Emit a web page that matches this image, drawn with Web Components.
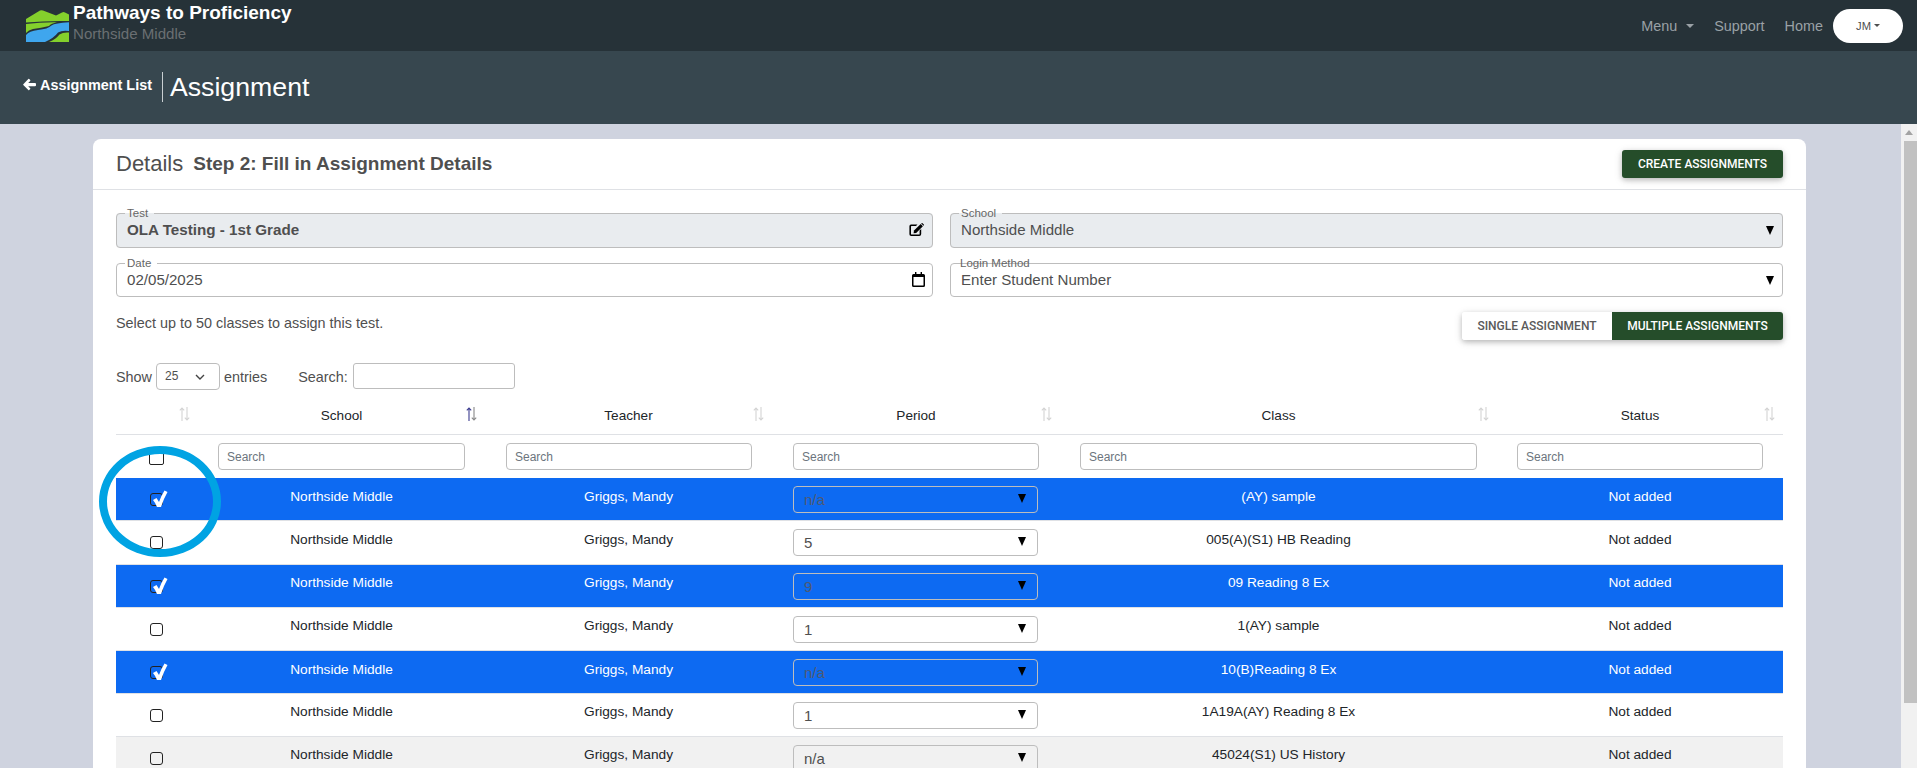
<!DOCTYPE html>
<html lang="en"><head><meta charset="utf-8"><title>Assignment</title>
<style>
html,body{margin:0;height:100%;overflow:hidden}
body{font-family:"Liberation Sans",Arial,sans-serif;background:#cfd3df;color:#4f4f4f;font-size:13.6px}
app-shell{height:768px}
</style></head><body>
<app-shell>
  <top-nav slot="nav"></top-nav>
  <sub-header slot="sub"></sub-header>
  <details-card>
    <field-box slot="f1" label="Test" filled bold value="OLA Testing - 1st Grade" icon="edit"></field-box>
    <field-box slot="f2" label="School" filled value="Northside Middle" icon="tri"></field-box>
    <field-box slot="f3" short label="Date" value="02/05/2025" icon="cal"></field-box>
    <field-box slot="f4" short label="Login Method" strike value="Enter Student Number" icon="tri"></field-box>
    <class-table slot="table">
      <class-row low selected period="n/a" name="(AY) sample" h="43"></class-row>
      <class-row low period="5" name="005(A)(S1) HB Reading" h="44"></class-row>
      <class-row selected period="9" name="09 Reading 8 Ex" h="43"></class-row>
      <class-row period="1" name="1(AY) sample" h="43"></class-row>
      <class-row low selected period="n/a" name="10(B)Reading 8 Ex" h="43"></class-row>
      <class-row period="1" name="1A19A(AY) Reading 8 Ex" h="43"></class-row>
      <class-row grey period="n/a" name="45024(S1) US History" h="43"></class-row>
    </class-table>
  </details-card>
</app-shell>
<script>
function def(name, css, html){
  customElements.define(name, class extends HTMLElement{
    connectedCallback(){
      if(this.shadowRoot) return;
      const r=this.attachShadow({mode:'open'});
      const a=n=>this.getAttribute(n);
      r.innerHTML='<style>'+css+'</style>'+(typeof html==='function'?html(a,this):html);
    }
  });
}
const FONT='"Liberation Sans",Arial,sans-serif';
const ROBOTO='Roboto,"Liberation Sans",Arial,sans-serif';

def('app-shell',`
:host{display:grid;grid-template-columns:1fr 16px;grid-template-rows:51px 73px 1fr;overflow:hidden;position:relative}
.nav{grid-column:1/3}.sub{grid-column:1/3}
.main{overflow:hidden;padding:15px 95px 0 93px;min-width:0}
.bar{background:#f1f1f1;display:flex;flex-direction:column;align-items:center}
.up{width:0;height:0;border:4px solid transparent;border-top:0;border-bottom:5px solid #a3a3a3;margin:6px 0 6px}
.thumb{width:13px;height:562px;background:#c1c1c1;margin-left:2px}
`,`<div class="nav"><slot name="nav"></slot></div><div class="sub"><slot name="sub"></slot></div>
<div class="main"><slot></slot></div>
<div class="bar"><div class="up"></div><div class="thumb"></div></div>`);

def('top-nav',`
:host{display:flex;height:51px;background:#263238;align-items:center;font-family:${FONT};box-sizing:border-box;padding:0 14px 0 26px}
svg{width:43px;height:32px;margin-top:1px;flex:none}
.brand{margin-left:4px;display:flex;flex-direction:column;align-self:flex-start;padding-top:2px}
.t{font-weight:700;font-size:19px;line-height:22px;color:#fff}
.s{font-size:15.1px;line-height:18px;color:#6a6f72;margin-top:1px}
.links{margin-left:auto;display:flex;align-items:center;font-size:14.4px;color:#9aa1a6}
.m{display:flex;align-items:center}
.car{width:0;height:0;border:4px solid transparent;border-top:4px solid #9aa1a6;border-bottom:0;margin-left:9px}
.sp{margin-left:20px}.hm{margin-left:20px}
.pill{margin-left:10px;width:70px;height:34px;border-radius:17px;background:#fff;color:#4f4f4f;font-size:11.2px;display:flex;align-items:center;justify-content:center}
.pill i{width:0;height:0;border:3px solid transparent;border-top:3px solid #4f4f4f;border-bottom:0;margin-left:3px}
`,`<svg viewBox="0 0 43 32" aria-hidden="true">
<path d="M0 9 L14 .6 Q15.5 -.2 17 .5 L30 5.5 L36 2.4 Q37.5 1.8 39 2.4 L43 4.5 V11 Q20 10.5 0 12.5Z" fill="#84d02c"/>
<path d="M0 14 Q16 12 31 12.3 Q25 13.5 23 16 Q15 18 7 19 Q2.5 20 0 23Z" fill="#84d02c"/>
<path d="M0 32 V25 Q3 21 12 20 Q22 19 25.5 15.5 Q29 13 43 12.3 V21 Q36 20 32 22.5 Q28 28 19 32Z" fill="#3fa6ee"/>
<path d="M43 22.5 V32 H23 Q30 29 33.5 24.5 Q37 22 43 22.5Z" fill="#84d02c"/>
</svg>
<div class="brand"><span class="t">Pathways to Proficiency</span><span class="s">Northside Middle</span></div>
<div class="links"><span class="m">Menu<i class="car"></i></span><span class="sp">Support</span><span class="hm">Home</span>
<span class="pill">JM<i></i></span></div>`);

def('sub-header',`
:host{display:flex;height:73px;background:#37474f;color:#fff;box-sizing:border-box;padding:21px 0 0 23px;align-items:flex-start;font-family:${FONT}}
.b{display:flex;align-items:center;font-weight:700;font-size:14.4px;height:29px;margin-top:-2px}
svg{width:13px;height:13px;margin-right:4px}
.d{width:1px;height:30px;background:#c9cfd2;margin-left:10px}
h1{margin:0 0 0 7px;font-weight:400;font-size:26.7px;line-height:30px}
`,`<div class="b"><svg viewBox="0 0 13 13"><path d="M6.2 1 L7.2 2 Q7.6 2.4 7.2 2.9 L5.2 4.9 H12 Q13 4.9 13 5.9 V7.3 Q13 8.2 12 8.2 H5.2 L7.2 10.2 Q7.6 10.6 7.2 11.1 L6.2 12 Q5.8 12.4 5.3 12 L0.3 7 Q0 6.6 0.3 6.2 L5.3 1 Q5.8 .6 6.2 1Z" fill="#fff"/></svg>Assignment List</div><div class="d"></div><h1>Assignment</h1>`);

def('details-card',`
:host{display:block;background:#fff;border-radius:8px 8px 0 0;font-family:${FONT};color:#4f4f4f}
.head{height:50px;border-bottom:1px solid #dfe1e5;box-sizing:content-box;display:flex;align-items:center;padding:0 23px;}
.d{font-size:22px;margin-right:10px}
.st{font-weight:700;font-size:19px}
.btn{margin-left:auto;width:161px;height:28px;background:#254d2a;color:#fff;border-radius:3px;display:flex;align-items:center;justify-content:center;font:500 12px ${ROBOTO};box-shadow:0 2px 5px rgba(0,0,0,.2),0 2px 10px rgba(0,0,0,.12)}
.body{padding:23px 23px 0}
.grid{display:grid;grid-template-columns:817px 833px;column-gap:17px;row-gap:15px}
.sel{display:flex;align-items:flex-start;margin-top:15px;height:51px}
.sel p{margin:0;font-size:14.4px;line-height:16px;padding-top:3px}
.tog{margin-left:auto;display:flex;height:28px;border-radius:3px;overflow:hidden;box-shadow:0 2px 5px rgba(0,0,0,.2),0 2px 10px rgba(0,0,0,.12);font:500 12px ${ROBOTO}}
.tog span{display:flex;align-items:center;justify-content:center}
.a{width:150px;background:#fff;color:#5a5a5a}.b{width:171px;background:#254d2a;color:#fff}
.show{display:flex;align-items:center;height:27px;font-size:14.4px}
.dd{width:64px;height:27px;box-sizing:border-box;border:1px solid #bdbdbd;border-radius:4px;margin:0 4px 0 4px;display:flex;align-items:center;justify-content:space-between;padding:0 14px 2px 8px;font-size:12px}
.dd svg{width:10px;height:6px;margin-top:3px}
.lab{margin-left:31px}
.in{width:162px;height:26px;box-sizing:border-box;border:1px solid #bdbdbd;border-radius:3px;margin:-1px 0 0 5px}
`,`<div class="head"><span class="d">Details</span><span class="st">Step 2: Fill in Assignment Details</span><span class="btn">CREATE ASSIGNMENTS</span></div>
<div class="body">
<div class="grid"><slot name="f1"></slot><slot name="f2"></slot><slot name="f3"></slot><slot name="f4"></slot></div>
<div class="sel"><p>Select up to 50 classes to assign this test.</p><div class="tog"><span class="a">SINGLE ASSIGNMENT</span><span class="b">MULTIPLE ASSIGNMENTS</span></div></div>
<div class="show">Show<span class="dd">25<svg viewBox="0 0 10 6"><path d="M1 1 L5 5 L9 1" fill="none" stroke="#444" stroke-width="1.4"/></svg></span>entries<span class="lab">Search:</span><span class="in"></span></div>
<slot name="table"></slot>
</div>`);

const ICONS={
 edit:`<svg width="16" height="15" viewBox="0 0 16 15" style="margin-top:-1px"><path d="M2 2.5 H8.5 L7 4 H2.6 Q2 4 2 4.6 V11.9 Q2 12.5 2.6 12.5 H10 Q10.6 12.5 10.6 11.9 V8.5 L12.2 7 V12 Q12.2 14 10.2 14 H2.2 Q.4 14 .4 12.2 V4.2 Q.4 2.5 2 2.5Z" fill="#000"/><path d="M5 8.6 L11.7 2 L13.9 4.2 L7.2 10.9 L4.6 11.3Z" fill="#000"/><path d="M12.4 1.2 Q13 .6 13.6 1.2 L14.8 2.4 Q15.3 3 14.7 3.5 L14.5 3.7 L12.2 1.5Z" fill="#000"/></svg>`,
 cal:`<svg width="13" height="15" viewBox="0 0 13 15"><path d="M3 0 H4.4 V2 H8.6 V0 H10 V2 H11.5 Q13 2 13 3.5 V13.5 Q13 15 11.5 15 H1.5 Q0 15 0 13.5 V3.5 Q0 2 1.5 2 H3Z M1.5 5 V13 Q1.5 13.5 2 13.5 H11 Q11.5 13.5 11.5 13 V5Z" fill="#000" fill-rule="evenodd"/></svg>`,
 tri:`<svg width="8" height="9" viewBox="0 0 8 9" style="margin-right:1px;margin-top:2px"><path d="M0 0 H8 L4 9Z" fill="#000"/></svg>`
};
def('field-box',`
:host{display:block;position:relative;font-family:${FONT}}
fieldset{margin:0;padding:0 7px 0 10px;border:1px solid #bdbdbd;border-radius:4px;height:35px;box-sizing:border-box;display:block;min-width:0}
:host([short]) fieldset{height:34px}
legend{padding:0 6px 0 2px;margin-left:-2px;font-size:11.5px;line-height:1px;height:1px;color:#666}
:host([filled]) fieldset{background:#e9ecef}
.row{display:flex;align-items:center;justify-content:space-between;height:33px;margin-top:-1px;font-size:15.1px;color:#4f4f4f}
:host([short]) .row{height:32px}
:host([bold]) .row{font-weight:700;font-size:15.2px}
.over{position:absolute;left:10px;top:-6px;font-size:11.5px;line-height:13px;color:#666}
`,a=>{const s=a('strike')!==null;return `<fieldset>${s?'<legend style="width:0;padding:0"></legend>':`<legend>${a('label')}</legend>`}<div class="row"><span>${a('value')}</span>${ICONS[a('icon')]||''}</div></fieldset>${s?`<span class="over">${a('label')}</span>`:''}`});

const COLS='82px 287px 287px 288px 437px 286px';
const sortIcon=(c1,c2)=>`<svg class="si" width="11" height="14" viewBox="0 0 11 14"><path d="M3 14 V1 M.8 3.4 L3 1 L5.2 3.4" fill="none" stroke="${c1}" stroke-width="1.1"/><path d="M8 0 V13 M5.8 10.6 L8 13 L10.2 10.6" fill="none" stroke="${c2}" stroke-width="1.1"/></svg>`;
def('class-table',`
:host{display:block;font-family:${FONT};color:#212529;position:relative}
.h,.f{display:grid;grid-template-columns:${COLS}}
.h{height:44px;border-bottom:1px solid #dfe1e5;box-sizing:content-box;margin-top:0}
.h div{position:relative;display:flex;align-items:center;justify-content:center;font-size:13.6px;padding-top:6px;box-sizing:border-box}
.si{position:absolute;right:8px;top:17px}
.f{height:43px;box-sizing:border-box}
.f div{padding:8px 20px 0 20px;box-sizing:border-box;min-width:0}
.f div:nth-child(3){padding-left:21px}
.f div:nth-child(4){padding:8px 21px 0 21px}
.f input{display:block;width:100%;height:27px;box-sizing:border-box;border:1px solid #bdbdbd;border-radius:4px;padding:0 8px;font:12px ${FONT};background:#fff;margin:0}
.f input::placeholder{color:#6c757d;opacity:1}
.f div.c{padding:17px 0 0 33px}
.box{display:block;width:15px;height:13px;border:1.5px solid #222;border-radius:2px;box-sizing:border-box}
.ring{position:absolute;left:-17px;top:56px;width:122px;height:111px;box-sizing:border-box;border:8px solid #00a3e3;border-radius:50%;pointer-events:none;z-index:3}
`,()=>{
 const names=['','School','Teacher','Period','Class','Status'];
 const ph=names.map((n,i)=>`<div>${sortIcon('#d3d3d3','#d3d3d3')}${n}</div>`);
 ph[1]=`<div>${sortIcon('#3b3b8f','#888')}School</div>`;
 return `<div class="h">${ph.join('')}</div>
 <div class="f"><div class="c"><span class="box"></span></div>${['','','','',''].map(()=>`<div><input placeholder="Search"></div>`).join('')}</div>
 <slot></slot><div class="ring"></div>`;
});

def('class-row',`
:host{display:grid;grid-template-columns:${COLS};box-sizing:border-box;font-family:${FONT};font-size:13.7px;color:#212529;background:#fff;border-bottom:1px solid #dfe1e5;overflow:hidden}
:host([selected]){background:#0d6af2;color:#fff}
:host([grey]){background:#f1f1f1}
.cell{text-align:center;padding-top:8px;line-height:20px;box-sizing:border-box;min-width:0}
:host([low]) .cell{padding-top:9px}
:host .cell.c,:host([low]) .cell.c{padding:15px 0 0 34px;text-align:left}
.box{display:block;width:13px;height:13px;border:1.5px solid #222;border-radius:3px;box-sizing:border-box;position:relative}
.box svg{position:absolute;left:-1.5px;top:-4.5px;overflow:visible}
:host .cell.p,:host([low]) .cell.p{padding:8px 22px 0 21px}
.dd{height:27px;box-sizing:border-box;border:1px solid #bdbdbd;border-radius:4px;background:#fff;display:flex;align-items:center;justify-content:space-between;padding:0 11px 0 10px;font-size:15px;color:#4f4f4f;text-align:left}
:host([selected]) .dd{background:transparent;color:#4d5a73}
:host([grey]) .dd{background:#f1f1f1}
.dd svg{margin-top:-3px}
`,(a,el)=>{
 const h=a('h')||43; el.style.height=h+'px';
 const sel=a('selected')!==null;
 return `<div class="cell c"><span class="box">${sel?`<svg width="18" height="18" viewBox="0 -3 18 18"><path d="M3 7 L6.5 5 L9 9 Q11 3 14.5 -2.5 L17.5 -1 Q13.5 6 11 14 L7 14 Q5.5 10 3 7Z" fill="#fff"/></svg>`:''}</span></div>
 <div class="cell">Northside Middle</div><div class="cell">Griggs, Mandy</div>
 <div class="cell p"><div class="dd"><span>${a('period')}</span><svg width="8" height="9" viewBox="0 0 8 9"><path d="M0 0 H8 L4 9Z" fill="#000"/></svg></div></div>
 <div class="cell">${a('name')}</div><div class="cell">Not added</div>`;
});
</script>
</body></html>
